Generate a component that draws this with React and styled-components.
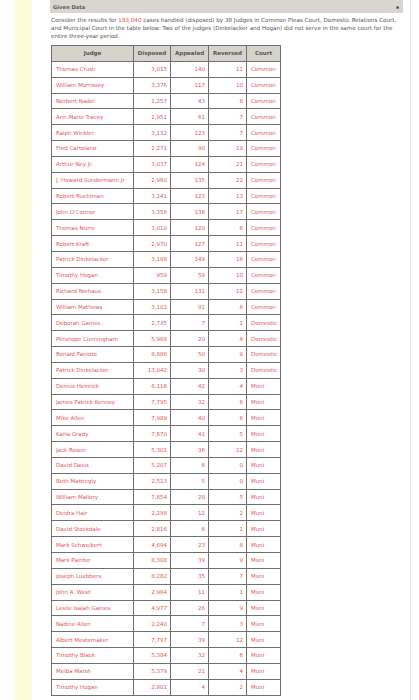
import React from "react";
import styled, { createGlobalStyle } from "styled-components";

const GlobalStyle = createGlobalStyle`
  body {
    margin: 0;
    background: #ffffff;
    font-family: "DejaVu Sans", Verdana, sans-serif;
  }
`;

const judges = [
  ["Thomas Crush", "3,015", "140", "11", "Common"],
  ["William Morrissey", "3,376", "117", "10", "Common"],
  ["Norbert Nadel", "1,257", "43", "8", "Common"],
  ["Ann Marie Tracey", "1,951", "61", "7", "Common"],
  ["Ralph Winkler", "3,132", "123", "7", "Common"],
  ["Fred Cartolano", "2,271", "90", "19", "Common"],
  ["Arthur Ney Jr.", "3,037", "124", "21", "Common"],
  ["J. Howard Sundermann Jr", "2,960", "135", "22", "Common"],
  ["Robert Ruehlman", "3,241", "123", "13", "Common"],
  ["John O'Connor", "3,356", "136", "17", "Common"],
  ["Thomas Nurre", "3,010", "120", "6", "Common"],
  ["Robert Kraft", "2,970", "127", "11", "Common"],
  ["Patrick Dinkelacker", "3,188", "149", "16", "Common"],
  ["Timothy Hogan", "959", "59", "10", "Common"],
  ["Richard Niehaus", "3,158", "131", "12", "Common"],
  ["William Mathews", "3,102", "91", "6", "Common"],
  ["Deborah Gaines", "2,735", "7", "1", "Domestic"],
  ["Penelope Cunningham", "5,989", "20", "4", "Domestic"],
  ["Ronald Panioto", "8,886", "50", "9", "Domestic"],
  ["Patrick Dinkelacker", "13,042", "30", "3", "Domestic"],
  ["Dennis Helmick", "6,116", "42", "4", "Muni"],
  ["James Patrick Kenney", "7,795", "32", "6", "Muni"],
  ["Mike Allen", "7,989", "40", "6", "Muni"],
  ["Karla Grady", "7,670", "41", "5", "Muni"],
  ["Jack Rosen", "5,301", "36", "12", "Muni"],
  ["David Davis", "5,207", "6", "0", "Muni"],
  ["Beth Mattingly", "2,513", "5", "0", "Muni"],
  ["William Mallory", "7,854", "28", "5", "Muni"],
  ["Deidra Hair", "2,298", "12", "2", "Muni"],
  ["David Stockdale", "2,816", "6", "1", "Muni"],
  ["Mark Schweikert", "4,694", "23", "8", "Muni"],
  ["Mark Painter", "8,308", "39", "9", "Muni"],
  ["Joseph Luebbers", "8,282", "35", "7", "Muni"],
  ["John A. West", "2,984", "11", "1", "Muni"],
  ["Leslie Isaiah Gaines", "4,977", "26", "9", "Muni"],
  ["Nadine Allen", "2,240", "7", "3", "Muni"],
  ["Albert Mestemaker", "7,797", "39", "12", "Muni"],
  ["Timothy Black", "5,384", "32", "6", "Muni"],
  ["Melba Marsh", "5,379", "21", "4", "Muni"],
  ["Timothy Hogan", "2,801", "4", "2", "Muni"],
];

const Page = styled.div`
  display: flex;
  min-height: 700px;
  padding-left: 15px;
`;

const Gutter = styled.div`
  width: 17px;
  background: #fdfcd9;
  flex-shrink: 0;
`;

const Panel = styled.section`
  width: 360px;
  padding-left: 18px;
  border-right: 1px solid #e6e6e6;
`;

const Header = styled.div`
  width: 353px;
  height: 13px;
  box-sizing: border-box;
  padding: 0 4px 0 3px;
  background: #d8d6cf;
  display: flex;
  align-items: center;
  justify-content: space-between;
  font-size: 5.2px;
  font-weight: bold;
  color: #5a5a5a;
`;

const Arrow = styled.span`
  font-size: 4px;
  color: #333;
`;

const Intro = styled.p`
  margin: 3px 0 0 1px;
  width: 356px;
  font-size: 5.6px;
  line-height: 8px;
  color: #555;
  white-space: nowrap;
`;

const Hl = styled.span`
  color: #e05555;
`;

const Table = styled.table`
  margin: 5px 0 0 1px;
  width: 229px;
  border-collapse: collapse;
  table-layout: fixed;
  font-size: 5.5px;
`;

const Row = styled.tr`
  height: 15.85px;
`;

const Th = styled.th`
  background: #d6d3cb;
  color: #555;
  font-weight: bold;
  text-align: center;
  border: 1px solid #6f6f6f;
  padding: 0;
`;

const Td = styled.td`
  border: 1px solid #6f6f6f;
  color: #e25656;
  padding: ${(p) => (p.$num ? "0 3px 0 0" : "0 0 0 4px")};
  text-align: ${(p) => (p.$num ? "right" : "left")};
  white-space: nowrap;
  overflow: hidden;
`;

export default function App() {
  return (
    <>
      <GlobalStyle />
      <Page>
        <Gutter />
        <Panel>
          <Header>
            <span>Given Data</span>
            <Arrow>▲</Arrow>
          </Header>
          <Intro>
            Consider the results for <Hl>183,040</Hl> cases handled (disposed) by 38 Judges in
            Common Pleas Court, Domestic Relations Court,
            <br />
            and Municipal Court in the table below. Two of the judges (Dinkelacker and Hogan) did
            not serve in the same court for the
            <br />
            entire three-year period.
          </Intro>
          <Table>
            <colgroup>
              <col style={{ width: 82 }} />
              <col style={{ width: 37 }} />
              <col style={{ width: 38 }} />
              <col style={{ width: 38 }} />
              <col style={{ width: 34 }} />
            </colgroup>
            <thead>
              <Row>
                <Th>Judge</Th>
                <Th>Disposed</Th>
                <Th>Appealed</Th>
                <Th>Reversed</Th>
                <Th>Court</Th>
              </Row>
            </thead>
            <tbody>
              {judges.map((j, i) => (
                <Row key={i}>
                  <Td>{j[0]}</Td>
                  <Td $num>{j[1]}</Td>
                  <Td $num>{j[2]}</Td>
                  <Td $num>{j[3]}</Td>
                  <Td>{j[4]}</Td>
                </Row>
              ))}
            </tbody>
          </Table>
        </Panel>
      </Page>
    </>
  );
}
